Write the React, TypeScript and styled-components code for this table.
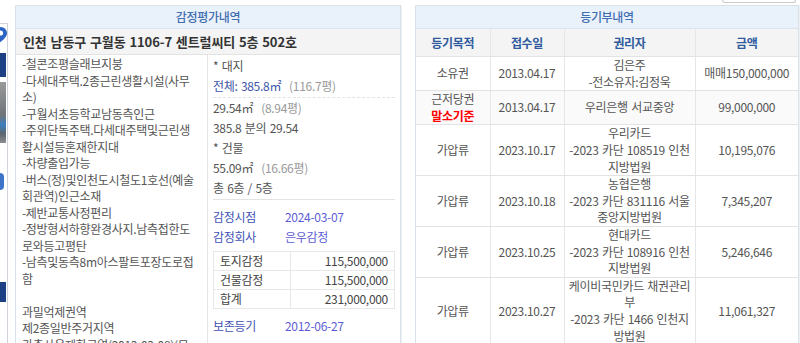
import styled, { createGlobalStyle } from 'styled-components';

const GlobalStyle = createGlobalStyle`
  html, body {
    margin: 0;
    padding: 0;
    background: #ffffff;
    overflow: hidden;
  }
  body {
    font-family: 'Noto Sans CJK KR', 'Noto Sans', sans-serif;
    font-size: 12px;
    color: #555555;
    letter-spacing: -0.3px;
    word-spacing: 1px;
  }
`;

const Page = styled.div`
  display: flex;
  align-items: flex-start;
  height: 343px;
  overflow: hidden;
`;

const SideStrip = styled.div`
  width: 7px;
  height: 330px;
  margin-top: 23px;
  border-top: 1px solid #cfd4db;
  border-right: 1px solid #cfd4db;
  display: flex;
  flex-direction: column;
  overflow: hidden;
  flex-shrink: 0;
`;

const StripBlock = styled.div<{ $top: number; $h: number; $bg: string }>`
  margin-top: ${({ $top }) => $top}px;
  height: ${({ $h }) => $h}px;
  width: 6px;
  background: ${({ $bg }) => $bg};
  flex-shrink: 0;
`;

const StripDot = styled.div`
  margin-top: 30px;
  width: 4px;
  height: 17px;
  border-radius: 0 9px 9px 0;
  background: #3d74c9;
  flex-shrink: 0;
`;

const Panel = styled.div<{ $w: number; $ml: number }>`
  width: ${({ $w }) => $w}px;
  margin-left: ${({ $ml }) => $ml}px;
  margin-top: 5px;
  border: 1px solid #dbe1e8;
  box-shadow: 1px 0 0 #eef1f4;
  flex-shrink: 0;
  background: #fff;
`;

const RightColumn = styled.div`
  display: flex;
  flex-direction: column;
  align-items: flex-end;
`;

const TopButtonStub = styled.div`
  width: 72px;
  height: 2px;
  margin-right: 3px;
  border: 1px solid #c9c9c9;
  border-top: none;
  border-radius: 0 0 3px 3px;
`;

const PanelTitle = styled.div`
  height: 22px;
  line-height: 22px;
  text-align: center;
  background: #e9f1fb;
  border-bottom: 1px solid #dbe3ec;
  color: #3f6db0;
  font-weight: 500;
`;

const Address = styled.div`
  height: 25px;
  line-height: 25px;
  padding-left: 7px;
  background: #f4f4f4;
  border-bottom: 1px solid #e3e3e3;
  color: #333;
  font-size: 13px;
  font-weight: 700;
  letter-spacing: -0.1px;
`;

const PanelBody = styled.div`
  display: grid;
  grid-template-columns: 192px 1fr;
`;

const Desc = styled.div`
  padding: 1px 0 0 6px;
  line-height: 16.5px;
  border-right: 1px solid #e5e5e5;
  white-space: nowrap;
  overflow: hidden;
`;

const Facts = styled.div`
  padding: 1px 5px 0 5px;
`;

const FactLine = styled.div`
  line-height: 20px;
  white-space: nowrap;
`;

const Area = styled.span`
  color: #3a55a5;
`;

const Pyeong = styled.span`
  color: #999;
  margin-left: 8px;
`;

const Dotted = styled.div`
  border-top: 1px dashed #e2e2e2;
  margin: 1px 0 0;
`;

const Rule = styled.div`
  border-top: 1px solid #e3e3e3;
  margin: 1px 0 7px;
`;

const InfoRow = styled.div`
  display: flex;
  line-height: 20px;
`;

const InfoLabel = styled.span`
  width: 72px;
  color: #4152b4;
`;

const InfoValue = styled.span`
  color: #5c5cd4;
`;

const ValueTable = styled.table`
  width: 100%;
  border-collapse: collapse;
  margin: 4px 0 7px;
  td {
    border: 1px solid #e8e8e8;
    height: 18px;
    line-height: 18px;
    padding: 0 6px;
    color: #444;
  }
  td + td {
    text-align: right;
  }
`;

const RegTable = styled.table`
  width: 100%;
  border-collapse: collapse;
  table-layout: fixed;
  th {
    height: 25px;
    background: #f4f4f4;
    color: #2f5b9e;
    font-weight: 700;
    border-bottom: 1px solid #e3e3e3;
    border-right: 1px solid #e6e6e6;
  }
  td {
    text-align: center;
    line-height: 16.6px;
    padding: 0;
    border-bottom: 1px solid #e3e3e3;
    border-right: 1px solid #e6e6e6;
    white-space: nowrap;
  }
  th:last-child,
  td:last-child {
    border-right: none;
  }
`;

const RegRow = styled.tr<{ $shade?: boolean }>`
  background: ${({ $shade }) => ($shade ? '#fafafa' : '#fff')};
`;

const Cancel = styled.span`
  color: #ff0000;
  font-weight: 700;
`;

const PinTip = () => (
  <svg width="7" height="15" viewBox="6 0 7 15" style={{ marginTop: 3, flexShrink: 0 }}>
    <path
      d="M6.5 0C3 0 0 2.8 0 6.3 0 10.5 6.5 15 6.5 15S13 10.5 13 6.3C13 2.8 10 0 6.5 0Z"
      fill="#2b64c4"
    />
    <circle cx="6.5" cy="6" r="2.6" fill="#fff" />
  </svg>
);

const descLines = [
  '-철콘조평슬래브지붕',
  '-다세대주택.2종근린생활시설(사무',
  '소)',
  '-구월서초등학교남동측인근',
  '-주위단독주택.다세대주택및근린생',
  '활시설등혼재한지대',
  '-차량출입가능',
  '-버스(정)및인천도시철도1호선(예술',
  '회관역)인근소재',
  '-제반교통사정편리',
  '-정방형서하향완경사지.남측접한도',
  '로와등고평탄',
  '-남측및동측8m아스팔트포장도로접',
  '함',
  '\u00a0',
  '과밀억제권역',
  '제2종일반주거지역',
  '가축사육제한구역(2013-03-08)(모',
];

type Reg = { kind: React.ReactNode; date: string; who: string[]; amount: string; shade?: boolean };

const regs: Reg[] = [
  { kind: '소유권', date: '2013.04.17', who: ['김은주', '-전소유자:김정욱'], amount: '매매150,000,000' },
  {
    kind: (
      <>
        근저당권
        <br />
        <Cancel>말소기준</Cancel>
      </>
    ),
    date: '2013.04.17',
    who: ['우리은행 서교중앙'],
    amount: '99,000,000',
    shade: true,
  },
  { kind: '가압류', date: '2023.10.17', who: ['우리카드', '-2023 카단 108519 인천', '지방법원'], amount: '10,195,076' },
  { kind: '가압류', date: '2023.10.18', who: ['농협은행', '-2023 카단 831116 서울', '중앙지방법원'], amount: '7,345,207' },
  { kind: '가압류', date: '2023.10.25', who: ['현대카드', '-2023 카단 108916 인천', '지방법원'], amount: '5,246,646' },
  {
    kind: '가압류',
    date: '2023.10.27',
    who: ['케이비국민카드 채권관리', '부', '-2023 카단 1466 인천지', '방법원'],
    amount: '11,061,327',
  },
];

const App = () => {
  return (
    <>
      <GlobalStyle />
      <Page>
        <SideStrip>
          <PinTip />
          <StripBlock $top={11} $h={24} $bg="#1d3f83" />
          <StripBlock $top={5} $h={61} $bg="linear-gradient(#9a9a9a, #6f7479 55%, #3b7fc0 70%, #5d666d 85%, #8b8f92)" />
          <StripDot />
          <StripBlock $top={92} $h={20} $bg="#1d3f83" />
        </SideStrip>

        <Panel $w={384} $ml={7}>
          <PanelTitle>감정평가내역</PanelTitle>
          <Address>인천 남동구 구월동 1106-7 센트럴씨티 5층 502호</Address>
          <PanelBody>
            <Desc>
              {descLines.map((l, i) => (
                <div key={i}>{l}</div>
              ))}
            </Desc>
            <Facts>
              <FactLine>* 대지</FactLine>
              <FactLine>
                <Area>전체: 385.8㎡</Area>
                <Pyeong>(116.7평)</Pyeong>
              </FactLine>
              <Dotted />
              <FactLine>
                29.54㎡<Pyeong>(8.94평)</Pyeong>
              </FactLine>
              <FactLine>385.8 분의 29.54</FactLine>
              <FactLine>* 건물</FactLine>
              <FactLine>
                55.09㎡<Pyeong>(16.66평)</Pyeong>
              </FactLine>
              <FactLine>총 6층 / 5층</FactLine>
              <Rule />
              <InfoRow>
                <InfoLabel>감정시점</InfoLabel>
                <InfoValue>2024-03-07</InfoValue>
              </InfoRow>
              <InfoRow>
                <InfoLabel>감정회사</InfoLabel>
                <InfoValue>은우감정</InfoValue>
              </InfoRow>
              <ValueTable>
                <tbody>
                  <tr>
                    <td>토지감정</td>
                    <td>115,500,000</td>
                  </tr>
                  <tr>
                    <td>건물감정</td>
                    <td>115,500,000</td>
                  </tr>
                  <tr>
                    <td>합계</td>
                    <td>231,000,000</td>
                  </tr>
                </tbody>
              </ValueTable>
              <InfoRow>
                <InfoLabel>보존등기</InfoLabel>
                <InfoValue>2012-06-27</InfoValue>
              </InfoRow>
            </Facts>
          </PanelBody>
        </Panel>

        <RightColumn>
          <TopButtonStub />
          <Panel $w={382} $ml={14} style={{ marginTop: 2 }}>
            <PanelTitle>등기부내역</PanelTitle>
            <RegTable>
              <colgroup>
                <col style={{ width: 74 }} />
                <col style={{ width: 74 }} />
                <col style={{ width: 131 }} />
                <col />
              </colgroup>
              <thead>
                <tr>
                  <th>등기목적</th>
                  <th>접수일</th>
                  <th>권리자</th>
                  <th>금액</th>
                </tr>
              </thead>
              <tbody>
                {regs.map((r, i) => (
                  <RegRow key={i} $shade={r.shade}>
                    <td>{r.kind}</td>
                    <td>{r.date}</td>
                    <td>
                      {r.who.map((w, j) => (
                        <div key={j}>{w}</div>
                      ))}
                    </td>
                    <td>{r.amount}</td>
                  </RegRow>
                ))}
              </tbody>
            </RegTable>
          </Panel>
        </RightColumn>
      </Page>
    </>
  );
};

export default App;
